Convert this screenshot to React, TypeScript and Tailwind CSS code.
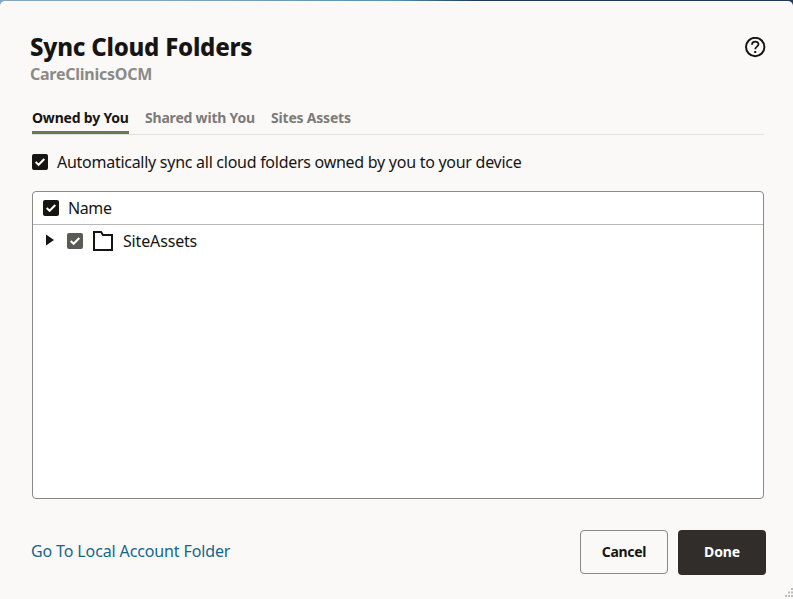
import React from "react";

function CheckBox({ tone }: { tone: string }) {
  return (
    <span className={`flex size-4 shrink-0 items-center justify-center rounded-[2px] ${tone}`}>
      <svg viewBox="0 0 16 16" className="size-4" fill="none" stroke="#fff" strokeWidth="2">
        <path d="M3.7 8 6.6 10.8 12.3 5" />
      </svg>
    </span>
  );
}

function ResizeGrip() {
  return (
    <svg className="absolute right-0 bottom-0" width="8" height="11" viewBox="0 0 8 11" fill="#bdbcba">
      <path d="M6 0h2v2H6zM3 3.5h2v2H3zM6 3.5h2v2H6zM0 7h2v2H0zM3 7h2v2H3zM6 7h2v2H6z" />
    </svg>
  );
}

export default function App() {
  return (
    <div className="h-[599px] w-[793px] overflow-hidden bg-linear-to-r from-[#86a5be] from-20% via-[#5790ad] via-50% to-[#203a59] to-60% pt-px font-['Noto_Sans',sans-serif] text-base text-[#161513]">
      <main className="relative flex h-[598px] flex-col rounded-t-[5px] bg-[#fbf9f8]">
        <header className="flex h-[100px] justify-between pt-[31px] pr-[27px] pl-[30px]">
          <div className="whitespace-nowrap">
            <h1 className="h-[30px] text-2xl leading-[30px] font-extrabold tracking-[-0.23px]"><span>Sync Cloud Folders</span></h1>
            <p className="text-base leading-6 font-bold tracking-[-0.25px] text-[#8b8a87]"><span>CareClinicsOCM</span></p>
          </div>
          <button className="mt-[5px] size-[21px]" aria-label="Help">
            <svg viewBox="0 0 21 21" fill="none" stroke="#161513" strokeWidth="2">
              <circle cx="10.2" cy="10" r="9.2" />
              <path d="M7 7.8c0-4.2 6.5-4 6.5-.5 0 2.3-3.3 2.4-3.3 5" strokeWidth="1.8" />
              <path d="M9.2 14h2v2h-2z" fill="#161513" stroke="none" />
            </svg>
          </button>
        </header>
        <nav className="mr-[29px] ml-8 flex h-[34px] gap-4 border-b border-[#e1e0de] text-sm leading-[34px] font-bold tracking-[-0.2px] whitespace-nowrap text-[#7c7b78]">
          <button className="h-[33px] w-[97px] border-b-3 border-[#5f7d4f] text-left text-[#161513]"><span>Owned by You</span></button>
          <button className="h-[33px] w-[110px] text-left"><span>Shared with You</span></button>
          <button className="h-[33px] w-20 text-left"><span>Sites Assets</span></button>
        </nav>
        <label className="ml-8 flex h-[56px] items-center gap-[9px] pb-0.5 tracking-[-0.27px] whitespace-nowrap">
          <CheckBox tone="bg-[#161513]" />
          <span>Automatically sync all cloud folders owned by you to your device</span>
        </label>
        <section className="mr-[29px] ml-8 h-[308px] rounded-[4px] border border-[#8b8987] bg-white whitespace-nowrap">
          <div className="flex h-[33px] items-center gap-[9px] border-b border-[#b9b8b6] pl-[10px] tracking-[-0.4px]">
            <CheckBox tone="bg-[#161513]" />
            <span>Name</span>
          </div>
          <div className="flex h-8 items-center pl-[13px] tracking-[-0.16px]">
            <svg className="-mt-0.5 mr-[13px]" width="8" height="12" viewBox="0 0 8 12" fill="#161513"><path d="M0 0.5 8 6 0 11.5z" /></svg>
            <CheckBox tone="bg-[#5b5a58]" />
            <svg className="mr-[10px] ml-[10px]" width="20" height="20" viewBox="0 0 20 20" fill="none" stroke="#161513" strokeWidth="2"><path d="M1 19V1h7l2 3H19v15z" /></svg>
            <span>SiteAssets</span>
          </div>
        </section>
        <footer className="flex items-start pt-[31px] pr-[27px] pl-[31px]">
          <a className="mr-auto text-base leading-[42px] tracking-[-0.13px] whitespace-nowrap text-[#136788]"><span>Go To Local Account Folder</span></a>
          <button className="mr-[10px] h-11 w-[88px] rounded-[4px] border border-[#8b8987] text-sm font-bold tracking-[-0.3px]"><span>Cancel</span></button>
          <button className="h-[45px] w-[88px] rounded-[4px] bg-[#312d2a] pb-0.5 text-sm font-bold tracking-[-0.15px] text-white"><span>Done</span></button>
        </footer>
        <ResizeGrip />
      </main>
    </div>
  );
}
